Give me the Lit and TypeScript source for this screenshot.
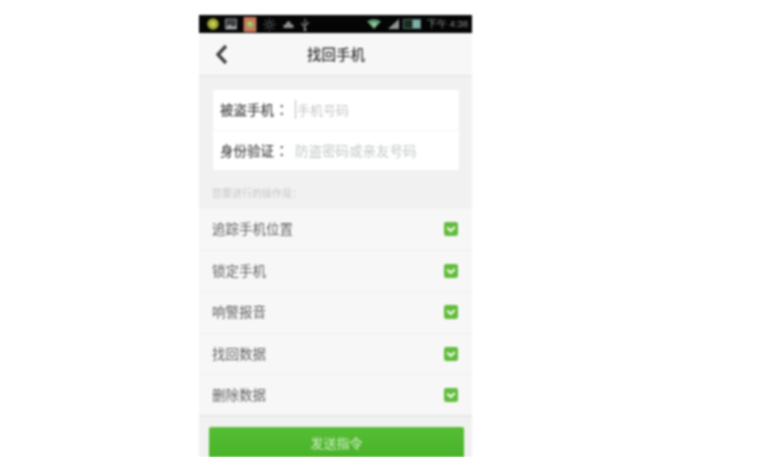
import { LitElement, html, css } from "lit";
import { customElement } from "lit/decorators.js";

const ITEMS = ["追踪手机位置", "锁定手机", "响警报音", "找回数据", "删除数据"];

@customElement("app-root")
export class AppRoot extends LitElement {
  static styles = css`
    :host { display: block; width: 762px; height: 457px; overflow: hidden; background: #fff;
      font-family: "Noto Sans CJK SC", "Liberation Sans", sans-serif; }
    .page { display: flex; justify-content: flex-start; padding: 15px 0 0 199px; }
    .phone { width: 273px; height: 442px; background: #f1f1f1; display: flex; flex-direction: column; overflow: hidden; filter: blur(0.8px); }
    .status { height: 18px; flex: none; background: #050505; display: flex; align-items: center; padding: 0 4px 0 8px; color: #8a8f8c; font: 9px "Liberation Sans", sans-serif; }
    .status svg { display: block; flex: none; }
    .left { display: flex; align-items: center; gap: 6px; }
    .right { margin-left: auto; display: flex; align-items: center; gap: 6px; }
    .status svg.sig { margin: 0 -2px 0 1px; }
    .time { font-size: 9.5px; white-space: nowrap; }
    .bar { height: 44px; flex: none; box-sizing: border-box; background: #f7f7f7; border-bottom: 2px solid #e9e9e9; display: grid; grid-template-columns: 1fr auto 1fr; align-items: center; }
    .bar svg { display: block; margin-left: 16px; }
    .title { font-size: 14.5px; font-weight: 500; color: #3b3b3b; padding-bottom: 1px; margin-left: 1px; }
    .form { margin: 13px 13px 0 14px; background: #fff; flex: none; }
    .field { height: 40px; box-sizing: border-box; display: flex; align-items: center; padding: 0 0 2px 7px; font-size: 13.5px; }
    .field + .field { border-top: 1px solid #f4f4f4; }
    .label { color: #4c4c4c; font-weight: 500; width: 75px; white-space: nowrap; }
    .colon { font-family: "Noto Sans CJK TC", sans-serif; margin-left: 1px; }
    .ph { color: #c4c8c8; }
    .caret { border-left: 1px solid #b8bcbc; padding-left: 1px; font-size: 13px; }
    .hint { height: 39px; flex: none; box-sizing: border-box; padding: 13px 0 0 13px; font-size: 10px; line-height: 20px; color: #c6c8c8; }
    .list { flex: none; background: #f7f7f7; }
    .row { height: 41.6px; box-sizing: border-box; display: flex; align-items: center; justify-content: space-between; padding: 0 14px 0 13px; border-bottom: 1px solid #efefef; font-size: 13.5px; color: #626262; }
    .row span { margin-bottom: 2px; }
    .row:last-child { border-bottom: 2px solid #e6e6e6; }
    .check { display: block; }
    .send { margin: 10px 8px 0 10px; height: 32px; flex: none; border-radius: 2px; background: linear-gradient(#56be34, #47b229); color: #d4eec8; font-size: 13px; display: flex; align-items: center; justify-content: center; box-sizing: border-box; }
  `;

  private check() {
    return html`<svg class="check" width="14" height="14" viewBox="0 0 13 13">
      <rect x="0" y="0" width="13" height="13" rx="2" fill="#62bc3c"></rect>
      <path d="M3 5.2 L6.3 8.3 L10 4.7" fill="none" stroke="#e8f5e0" stroke-width="2.2"></path>
    </svg>`;
  }

  render() {
    return html`<div class="page"><div class="phone">
      <div class="status">
        <div class="left">
          <svg width="12" height="12" viewBox="0 0 11 11"><circle cx="5.5" cy="5.5" r="5.3" fill="#9aa52a"></circle><circle cx="5.5" cy="5.5" r="2.4" fill="#c9c96a"></circle></svg>
          <svg width="12" height="12" viewBox="0 0 11 11"><rect x="0.5" y="1" width="10" height="9" fill="#3b3f40" stroke="#8b9090"></rect><path d="M1 9 L4 6 L7 8 L10 7 V10 H1Z" fill="#a5a9a9"></path></svg>
          <svg width="14" height="15" viewBox="0 0 12 14"><rect width="12" height="14" rx="1" fill="#c9765a"></rect><circle cx="6" cy="7" r="3.4" fill="#8fb56a"></circle><circle cx="6" cy="6" r="1.6" fill="#e2c35a"></circle></svg>
          <svg width="13" height="13" viewBox="0 0 12 12" stroke="#55595a" stroke-width="1"><circle cx="6" cy="6" r="2.2" fill="none"></circle><path d="M6 0V2.5M6 9.5V12M0 6H2.5M9.5 6H12M1.8 1.8L3.4 3.4M8.6 8.6L10.2 10.2M1.8 10.2L3.4 8.6M8.6 3.4L10.2 1.8"></path></svg>
          <svg width="13" height="9" viewBox="0 0 11 9"><path d="M0.5 8 V5 L3 4 L4 1.5 H7 L8 4 L10.5 5 V8Z" fill="#8d9191"></path></svg>
          <svg width="8" height="13" viewBox="0 0 8 13" fill="none" stroke="#8d9191" stroke-width="1.1"><path d="M4 0.5V12.5M4 9L1 6.5V4.5M4 7.5L7 5.5V3.5"></path><circle cx="4" cy="11.5" r="1" fill="#8d9191"></circle></svg>
        </div>
        <div class="right">
          <svg width="14" height="10" viewBox="0 0 14 10"><path d="M0 2.5 Q7 -2 14 2.5 L7 10Z" fill="#5f9a6d"></path><path d="M3.5 4.5 Q7 2.5 10.5 4.5 L7 8.5Z" fill="#97c8a0"></path></svg>
          <svg class="sig" width="11" height="10" viewBox="0 0 11 10"><path d="M11 0 V10 H0Z" fill="#8f9393"></path></svg>
          <svg width="18" height="10" viewBox="0 0 18 10"><rect width="18" height="10" fill="#4f6f68"></rect><rect x="1" y="1" width="8" height="8" fill="#1a2a1f"></rect><rect x="10" y="1" width="7" height="8" fill="#7fb0a6"></rect></svg>
          <span class="time">下午 4:38</span>
        </div>
      </div>
      <div class="bar">
        <svg width="13" height="21" viewBox="0 0 13 21"><path d="M11 2 L3 10.5 L11 19" fill="none" stroke="#444" stroke-width="3.4"></path></svg>
        <span class="title">找回手机</span>
        <span></span>
      </div>
      <div class="form">
        <div class="field"><span class="label">被盗手机<span class="colon">：</span></span><span class="ph caret">手机号码</span></div>
        <div class="field"><span class="label">身份验证<span class="colon">：</span></span><span class="ph">防盗密码或亲友号码</span></div>
      </div>
      <div class="hint">您要进行的操作是：</div>
      <div class="list">
        ${ITEMS.map((t) => html`<div class="row"><span>${t}</span>${this.check()}</div>`)}
      </div>
      <div class="send">发送指令</div>
    </div></div>`;
  }
}
